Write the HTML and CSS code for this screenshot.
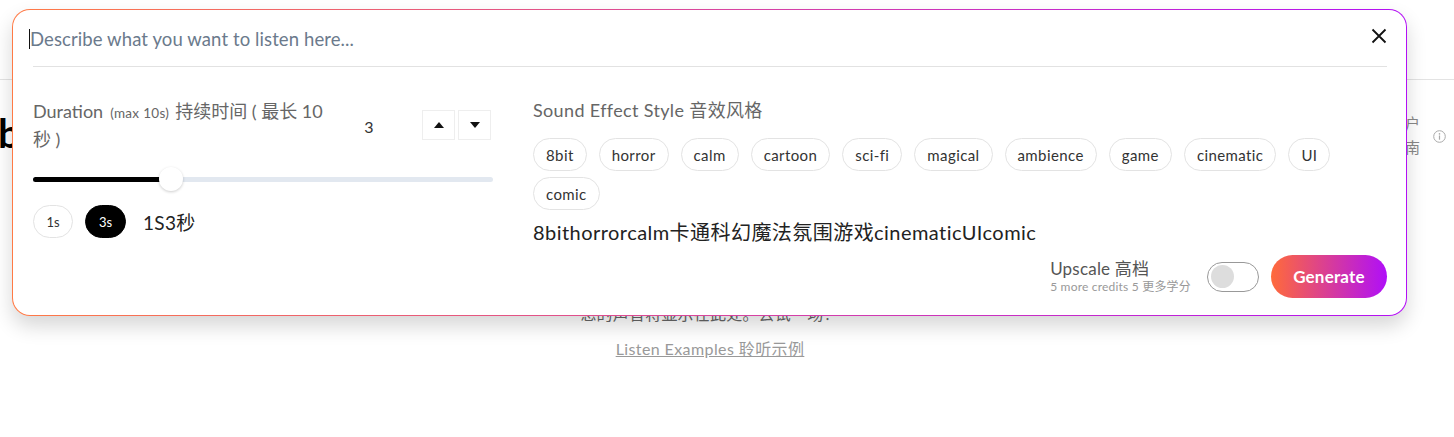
FILE: index.html
```html
<!DOCTYPE html>
<html lang="zh">
<head>
<meta charset="utf-8">
<title>Sound Effects</title>
<link rel="stylesheet" href="styles.css">
</head>
<body>
<div class="page">
  <header class="topbar"></header>
  <div class="hero">
    <h1 class="title">b</h1>
    <div class="side">
      <span class="side-text">户南</span>
      <svg class="info" width="13" height="13" viewBox="0 0 13 13"><circle cx="6.5" cy="6.5" r="5.8" fill="none" stroke="#aaa" stroke-width="1"/><circle cx="6.5" cy="3.9" r="0.8" fill="#aaa"/><rect x="5.9" y="5.5" width="1.2" height="4.2" fill="#aaa"/></svg>
    </div>
  </div>
  <div class="result">
    <p class="result-msg">您的声音将显示在此处。去试一场！</p>
    <a class="examples" href="#">Listen Examples 聆听示例</a>
  </div>
</div>

<div class="modal">
  <div class="prompt">
    <div class="prompt-input"><span class="caret"></span><span class="placeholder">Describe what you want to listen here...</span></div>
    <svg class="close" width="16" height="16" viewBox="0 0 16 16"><path d="M1.5 1.5 L14.5 14.5 M14.5 1.5 L1.5 14.5" stroke="#111" stroke-width="1.8" fill="none"/></svg>
  </div>
  <div class="body">
    <div class="duration">
      <div class="dur-row">
        <div class="dur-label"><span class="dur-en">Duration</span><small class="dur-max">(max 10s)</small><span class="dur-zh">持续时间 ( 最长 10</span> <span class="dur-zh">秒 )</span></div>
        <div class="dur-num">3</div>
        <div class="spin">
          <button class="spin-btn"><svg width="10" height="6" viewBox="0 0 10 6"><path d="M5 0 L10 6 L0 6 Z" fill="#111"/></svg></button>
          <button class="spin-btn"><svg width="10" height="6" viewBox="0 0 10 6"><path d="M0 0 L10 0 L5 6 Z" fill="#111"/></svg></button>
        </div>
      </div>
      <div class="slider">
        <div class="track"><div class="fill" style="width:30%"></div></div>
        <div class="thumb" style="left:30%"></div>
      </div>
      <div class="presets">
        <span class="pill">1s</span>
        <span class="pill active">3s</span>
        <span class="preset-text">1S3秒</span>
      </div>
    </div>
    <div class="style">
      <div class="style-label">Sound Effect Style 音效风格</div>
      <div class="chips">
        <span class="chip">8bit</span>
        <span class="chip">horror</span>
        <span class="chip">calm</span>
        <span class="chip">cartoon</span>
        <span class="chip">sci-fi</span>
        <span class="chip">magical</span>
        <span class="chip">ambience</span>
        <span class="chip">game</span>
        <span class="chip">cinematic</span>
        <span class="chip">UI</span>
        <span class="chip">comic</span>
      </div>
      <div class="style-text">8bithorrorcalm卡通科幻魔法氛围游戏cinematicUIcomic</div>
      <div class="actions">
        <div class="upscale">
          <div class="up-title">Upscale 高档</div>
          <div class="up-sub">5 more credits 5 更多学分</div>
        </div>
        <span class="toggle"><span class="knob"></span></span>
        <button class="generate">Generate</button>
      </div>
    </div>
  </div>
</div>
</body>
</html>
```

FILE: styles.css
```css
* { box-sizing: border-box; }
html, body { margin: 0; padding: 0; background: #fff; }
body {
  font-family: Lato, "Noto Sans CJK SC", sans-serif;
  color: #333;
  width: 1454px;
  height: 437px;
  overflow: hidden;
  position: relative;
}
.page { width: 100%; }
.topbar {
  height: 80px;
  border-bottom: 1px solid #e3e3e3;
}
.hero {
  display: flex;
  justify-content: space-between;
  align-items: flex-start;
  padding-top: 33px;
}
.title {
  margin: 0;
  font-size: 40px;
  line-height: 40px;
  font-weight: 700;
  color: #000;
  margin-left: -2px;
}
.side {
  display: flex;
  align-items: center;
  gap: 12px;
  padding-right: 8px;
  margin-top: -2px;
}
.side-text {
  width: 16px;
  font-size: 15px;
  line-height: 24px;
  color: #888;
  font-family: "Noto Sans CJK SC", sans-serif;
}
.info { display: block; margin-top: 2px; }
.result {
  display: flex;
  flex-direction: column;
  align-items: center;
  margin-top: 144px;
  padding-right: 34px;
}
.result-msg {
  margin: 0;
  font-size: 16px;
  line-height: 22px;
  color: #666;
  letter-spacing: 0.2px;
}
.examples {
  margin-top: 14px;
  font-size: 16px;
  line-height: 20px;
  color: #999;
  letter-spacing: 0.4px;
  text-decoration: underline;
}

.modal {
  position: absolute;
  left: 12px;
  top: 9px;
  width: 1395px;
  height: 307px;
  border: 1px solid transparent;
  border-radius: 18px;
  background: linear-gradient(#fff, #fff) padding-box,
              linear-gradient(90deg, #ff7a45, #b30ff5) border-box;
  box-shadow: 0 10px 20px rgba(0, 0, 0, 0.16);
  padding: 0 19px 0 20px;
}
.prompt {
  height: 57px;
  display: flex;
  align-items: center;
  justify-content: space-between;
  border-bottom: 1px solid #e2e2e2;
}
.prompt-input {
  display: flex;
  align-items: center;
  margin-left: -4px;
  padding-top: 2px;
}
.caret {
  width: 1px;
  height: 20px;
  background: #111;
}
.placeholder {
  font-size: 18.5px;
  letter-spacing: 0.1px;
  color: #6b7a8c;
}
.close { margin-top: -4px; }

.body {
  display: flex;
  gap: 40px;
  padding-top: 31px;
}
.duration { width: 460px; }
.dur-row {
  display: flex;
  align-items: center;
}
.dur-label {
  width: 300px;
  font-size: 18px;
  line-height: 26px;
  color: #666;
}
.dur-max {
  font-size: 13.5px;
  letter-spacing: 0.3px;
  margin: 0 6px 0 7px;
}
.dur-num {
  width: 72px;
  text-align: center;
  font-size: 16px;
  color: #333;
  padding-top: 2px;
}
.spin {
  display: flex;
  gap: 3px;
  margin-left: 17px;
}
.spin-btn {
  width: 33px;
  height: 30px;
  border: 1px solid #eee;
  background: #fff;
  padding: 0;
  display: flex;
  align-items: center;
  justify-content: center;
}
.slider {
  position: relative;
  margin-top: 15px;
  height: 24px;
  display: flex;
  align-items: center;
}
.track {
  width: 100%;
  height: 5px;
  border-radius: 3px;
  background: #e2e8f0;
  overflow: hidden;
}
.fill { height: 100%; background: #000; }
.thumb {
  position: absolute;
  top: 0;
  width: 24px;
  height: 24px;
  margin-left: -12px;
  border-radius: 50%;
  background: #fff;
  box-shadow: 0 1px 3px rgba(0, 0, 0, 0.2);
}
.presets {
  display: flex;
  align-items: center;
  gap: 12px;
  margin-top: 14px;
}
.pill {
  height: 33px;
  min-width: 40px;
  padding: 0 12px;
  border: 1px solid #e3e3e3;
  border-radius: 17px;
  display: flex;
  align-items: center;
  justify-content: center;
  font-size: 13px;
  color: #333;
}
.pill.active {
  background: #000;
  border-color: #000;
  color: #fff;
  min-width: 41px;
}
.preset-text {
  margin-left: 5px;
  font-size: 19px;
  letter-spacing: 0.3px;
  color: #222;
}

.style { flex: 1; display: flex; flex-direction: column; }
.style-label {
  font-size: 18px;
  line-height: 24px;
  letter-spacing: 0.35px;
  color: #666;
}
.chips {
  display: flex;
  flex-wrap: wrap;
  gap: 6px 12px;
  margin-top: 16px;
}
.chip {
  height: 33px;
  padding: 0 12px;
  border: 1px solid #e3e3e3;
  border-radius: 17px;
  display: flex;
  align-items: center;
  font-size: 15px;
  letter-spacing: 0.4px;
  color: #333;
}
.style-text {
  margin-top: 9px;
  font-size: 20px;
  line-height: 26px;
  letter-spacing: 0.45px;
  color: #222;
}
.actions {
  display: flex;
  align-items: center;
  justify-content: flex-end;
  margin-top: 10px;
}
.upscale { margin-right: 16px; }
.up-title { font-size: 17px; line-height: 21px; color: #555; letter-spacing: 0.2px; }
.up-sub { font-size: 12px; line-height: 16px; color: #999; letter-spacing: 0.2px; }
.toggle {
  width: 52px;
  height: 30px;
  border: 1.5px solid #999;
  border-radius: 15px;
  display: flex;
  align-items: center;
  padding: 0 3px;
  margin-right: 12px;
}
.knob {
  width: 23px;
  height: 23px;
  border-radius: 50%;
  background: #ddd;
}
.generate {
  width: 116px;
  height: 43px;
  border: none;
  border-radius: 22px;
  background: linear-gradient(90deg, #ff6a3a, #b00ff8);
  color: #fff;
  font-family: Lato, sans-serif;
  font-size: 17px;
  font-weight: 700;
  letter-spacing: 0.2px;
}
```
